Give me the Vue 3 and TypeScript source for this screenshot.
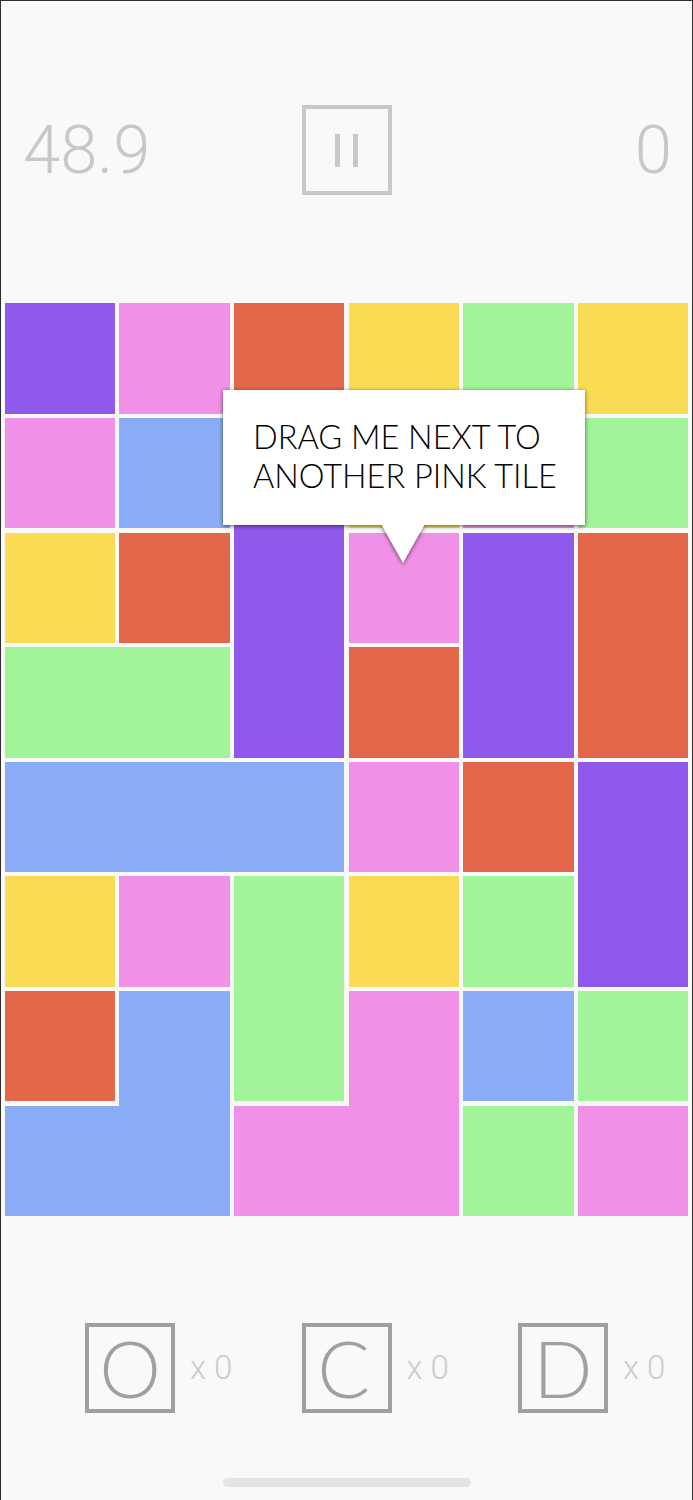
<script setup lang="ts">
interface Tile {
  col: number
  row: number
  w?: number
  h?: number
  color: string
}

const purple = '#8f5aeb'
const pink = '#f090e6'
const red = '#e3674a'
const yellow = '#f9dc53'
const green = '#a1f497'
const blue = '#8badf7'

const tiles: Tile[] = [
  { col: 1, row: 1, color: purple },
  { col: 2, row: 1, color: pink },
  { col: 3, row: 1, color: red },
  { col: 4, row: 1, color: yellow },
  { col: 5, row: 1, color: green },
  { col: 6, row: 1, color: yellow },
  { col: 1, row: 2, color: pink },
  { col: 2, row: 2, color: blue },
  { col: 3, row: 2, h: 3, color: purple },
  { col: 4, row: 2, color: yellow },
  { col: 5, row: 2, color: pink },
  { col: 6, row: 2, color: green },
  { col: 1, row: 3, color: yellow },
  { col: 2, row: 3, color: red },
  { col: 4, row: 3, color: pink },
  { col: 5, row: 3, h: 2, color: purple },
  { col: 6, row: 3, h: 2, color: red },
  { col: 1, row: 4, w: 2, color: green },
  { col: 4, row: 4, color: red },
  { col: 1, row: 5, w: 3, color: blue },
  { col: 4, row: 5, color: pink },
  { col: 5, row: 5, color: red },
  { col: 6, row: 5, h: 2, color: purple },
  { col: 1, row: 6, color: yellow },
  { col: 2, row: 6, color: pink },
  { col: 3, row: 6, h: 2, color: green },
  { col: 4, row: 6, color: yellow },
  { col: 5, row: 6, color: green },
  { col: 1, row: 7, color: red },
  { col: 2, row: 7, h: 2, color: blue },
  { col: 4, row: 7, h: 2, color: pink },
  { col: 5, row: 7, color: blue },
  { col: 6, row: 7, color: green },
  { col: 1, row: 8, w: 2, color: blue },
  { col: 3, row: 8, w: 2, color: pink },
  { col: 5, row: 8, color: green },
  { col: 6, row: 8, color: pink },
]

const tileStyle = (t: Tile) => ({
  gridColumn: `${t.col} / span ${t.w ?? 1}`,
  gridRow: `${t.row} / span ${t.h ?? 1}`,
  background: t.color,
})

const powerups = ['O', 'C', 'D']
</script>

<template>
  <div class="screen">
    <header class="top-bar">
      <span class="stat">48.9</span>
      <button class="pause" type="button" aria-label="Pause">
        <i></i>
        <i></i>
      </button>
      <span class="stat">0</span>
    </header>

    <main class="board">
      <div v-for="(t, i) in tiles" :key="i" class="tile" :style="tileStyle(t)"></div>
      <div class="tip">
        <p>DRAG ME NEXT TO<br />ANOTHER PINK TILE</p>
      </div>
    </main>

    <footer class="powerups">
      <div v-for="p in powerups" :key="p" class="powerup">
        <span class="powerup-box">{{ p }}</span>
        <span class="powerup-count">x 0</span>
      </div>
    </footer>

    <div class="home-bar"></div>
  </div>
</template>

<style>
html,
body {
  margin: 0;
  background: #f9f9f9;
}
</style>

<style scoped>
.screen {
  box-sizing: border-box;
  width: 693px;
  height: 1500px;
  overflow: hidden;
  background: #f9f9f9;
  border-top: 1px solid #2e2e2e;
  border-left: 1px solid #2e2e2e;
  border-right: 1px solid #2e2e2e;
  font-family: Lato, "Noto Sans", sans-serif;
  display: flex;
  flex-direction: column;
}

.top-bar {
  display: flex;
  align-items: center;
  justify-content: space-between;
  height: 90px;
  margin-top: 104px;
  padding: 0 20px 0 22px;
}

.stat {
  width: 160px;
  font-family: Roboto, sans-serif;
  font-size: 67px;
  font-weight: 300;
  line-height: 90px;
  color: #c8c8c8;
}

.stat:last-child {
  width: 162px;
  text-align: right;
}

.pause {
  box-sizing: border-box;
  width: 90px;
  height: 90px;
  padding: 0;
  display: flex;
  align-items: center;
  justify-content: center;
  gap: 13px;
  background: none;
  border: 4px solid #c8c8c8;
}

.pause i {
  width: 5px;
  height: 33px;
  background: #c8c8c8;
}

.board {
  position: relative;
  display: grid;
  grid-template-columns: repeat(6, 110.43px);
  grid-template-rows: repeat(8, 110.43px);
  gap: 4.2px;
  margin: 108.3px 0 0 3.8px;
  padding: 0;
  width: 683.6px;
}

.tip {
  position: absolute;
  left: 218.2px;
  top: 86.7px;
  box-sizing: border-box;
  width: 362px;
  height: 135px;
  padding: 27.5px 0 0 30px;
  background: #fff;
  filter: drop-shadow(0 1px 2px rgba(0, 0, 0, 0.6));
}

.tip::after {
  content: '';
  position: absolute;
  left: 158px;
  top: 134px;
  width: 44px;
  height: 39px;
  background: #fff;
  clip-path: polygon(0 0, 100% 0, 50% 100%);
}

.tip p {
  margin: 0;
  font-size: 32.5px;
  font-weight: 300;
  line-height: 39px;
  color: #000;
  white-space: nowrap;
}

.powerups {
  display: flex;
  gap: 67.5px;
  margin: 107px 0 0 84px;
}

.powerup {
  display: flex;
  align-items: center;
  gap: 15px;
}

.powerup-box {
  box-sizing: border-box;
  width: 90px;
  height: 90px;
  display: flex;
  align-items: center;
  justify-content: center;
  border: 4px solid #a0a0a0;
  font-size: 78px;
  font-weight: 300;
  color: #a0a0a0;
}

.powerup:nth-child(2) .powerup-box {
  padding-right: 6px;
}

.powerup-count {
  width: 44px;
  font-family: Roboto, sans-serif;
  font-size: 33px;
  font-weight: 300;
  color: #cccccc;
  white-space: nowrap;
}

.home-bar {
  width: 248px;
  height: 9px;
  margin: 65px 0 0 222px;
  border-radius: 5px;
  background: #e4e4e4;
}
</style>
